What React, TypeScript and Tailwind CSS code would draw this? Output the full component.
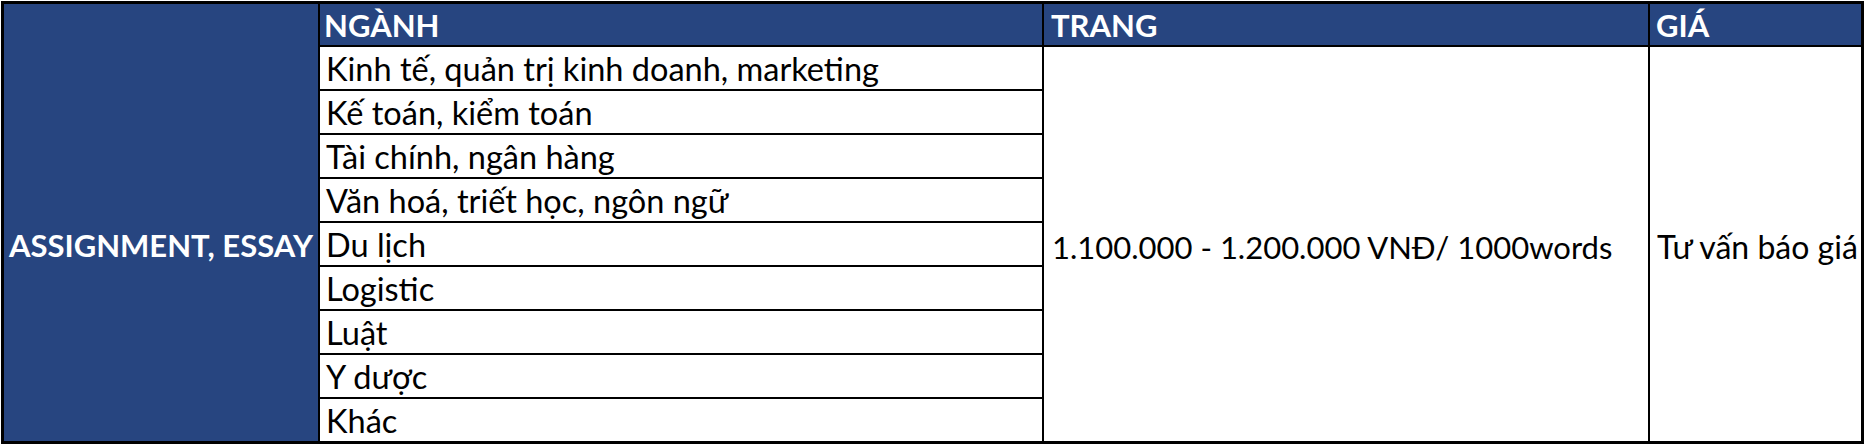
import React from 'react';

const majors = [
  'Kinh tế, quản trị kinh doanh, marketing',
  'Kế toán, kiểm toán',
  'Tài chính, ngân hàng',
  'Văn hoá, triết học, ngôn ngữ',
  'Du lịch',
  'Logistic',
  'Luật',
  'Y dược',
  'Khác',
];

export default function App() {
  return (
    <div className="w-[1868px] h-[444px] bg-white pl-[1px] pt-[1px] font-['Lato',_sans-serif]">
      <div className="grid w-[1863px] grid-cols-[314px_722px_604px_211px] grid-rows-[41px_repeat(9,42px)] gap-[2px] border-[3px] border-black bg-black text-[31px] leading-none">
        <div className="col-start-1 row-start-1 row-span-10 flex items-center justify-center bg-[#274580] pt-[45px] font-bold text-white">
          ASSIGNMENT, ESSAY
        </div>

        <div className="col-start-2 row-start-1 flex items-center bg-[#274580] pl-[4px] pt-[2px] font-bold text-white">
          NGÀNH
        </div>
        <div className="col-start-3 row-start-1 flex items-center bg-[#274580] pl-[7px] pt-[2px] font-bold text-white">
          TRANG
        </div>
        <div className="col-start-4 row-start-1 flex items-center bg-[#274580] pl-[6px] pt-[2px] font-bold text-white">
          GIÁ
        </div>

        {majors.map((m) => (
          <div key={m} className="col-start-2 flex items-center bg-white pl-[6px] pt-[3px] text-[32.5px] text-black whitespace-nowrap">
            {m}
          </div>
        ))}

        <div className="col-start-3 row-start-2 row-span-9 flex items-center bg-white pl-[8px] pt-[6px] text-black whitespace-nowrap">
          1.100.000 - 1.200.000 VNĐ/ 1000words
        </div>
        <div className="col-start-4 row-start-2 row-span-9 flex items-center bg-white pl-[7px] pt-[6px] text-[32px] text-black whitespace-nowrap">
          Tư vấn báo giá
        </div>
      </div>
    </div>
  );
}
